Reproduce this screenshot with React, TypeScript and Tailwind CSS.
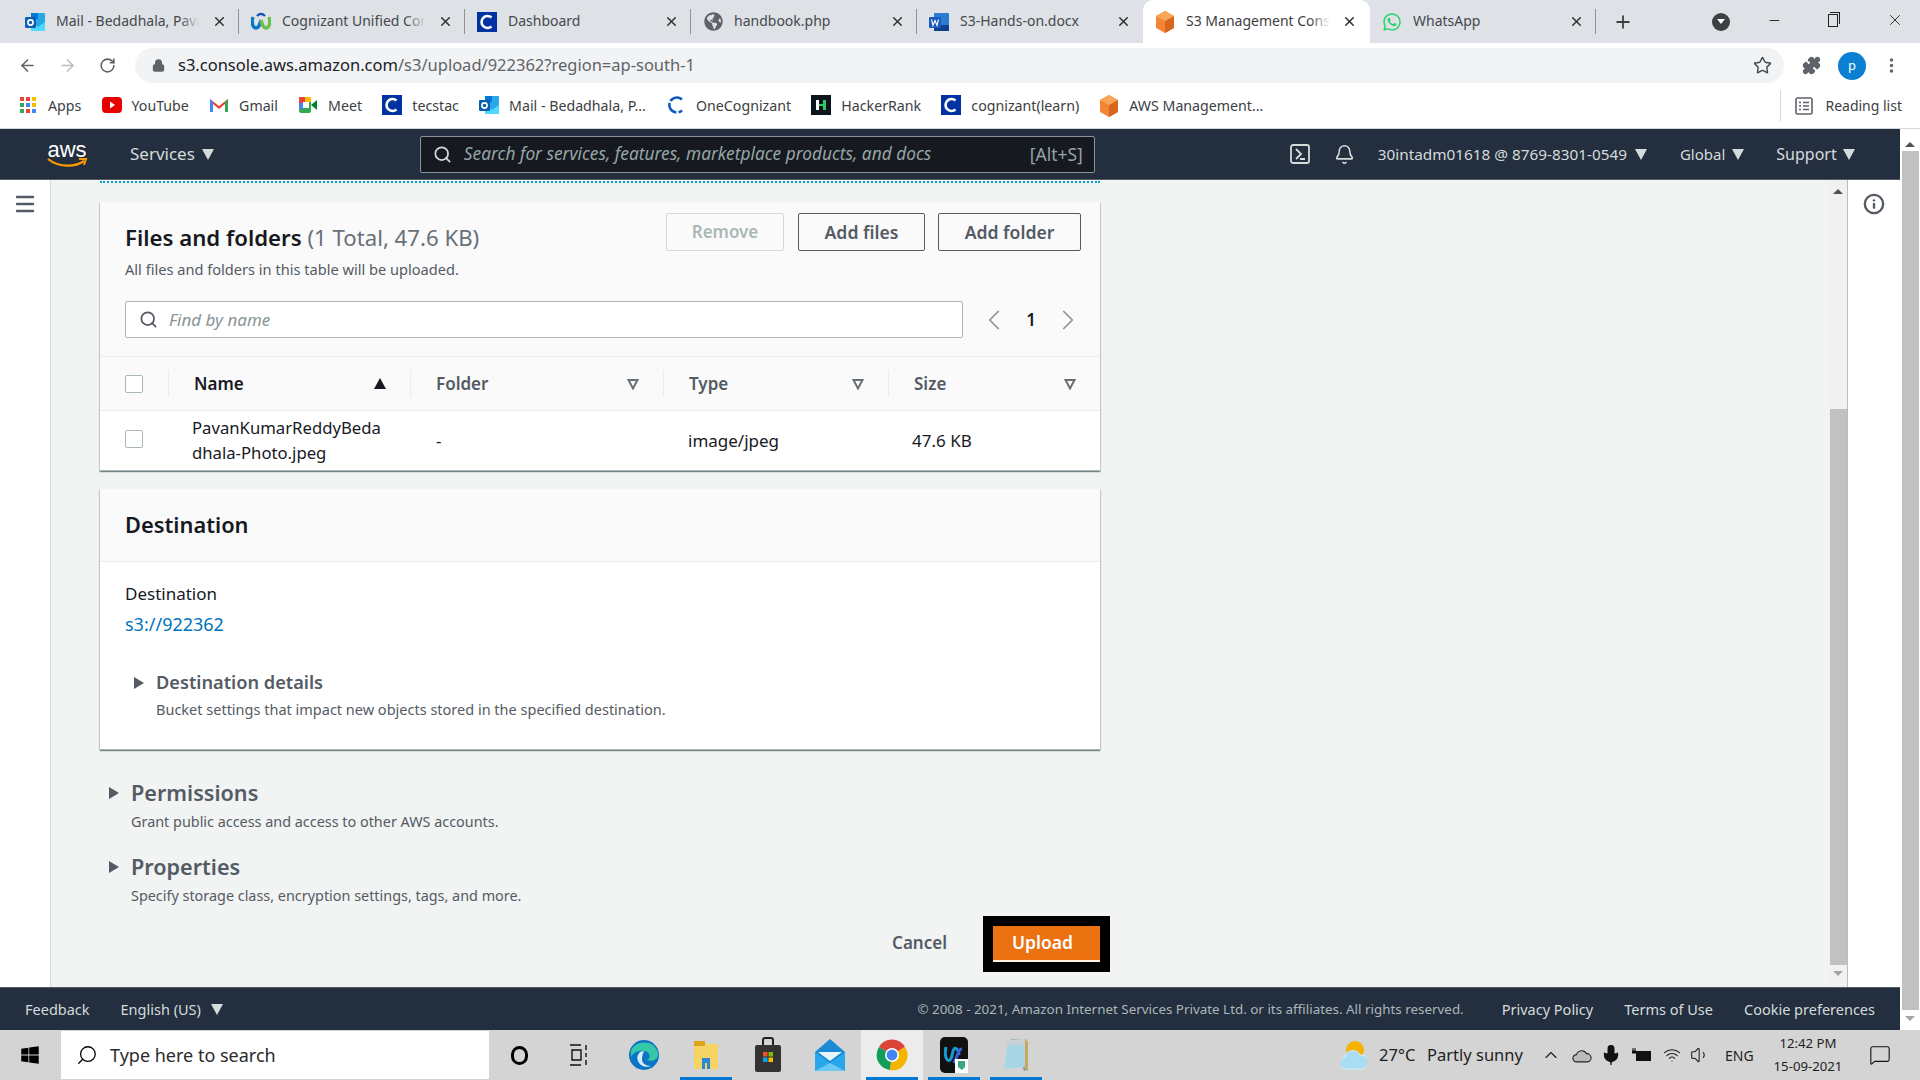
import { ChevronLeft, ChevronRight, Search, Bell, ArrowLeft, ArrowRight, RotateCw, Lock, Star, Puzzle, Plus, X, Minus, EllipsisVertical, Menu, Info, ChevronUp, Wifi, Volume1, Mic, MessageSquare } from 'lucide-react';
import { FaWhatsapp, FaGlobeAmericas, FaWindows } from 'react-icons/fa';

function Outlook() {
  return (
    <svg viewBox="0 0 20 20" className="w-5 h-5 shrink-0">
      <rect x="6" y="1" width="14" height="18" rx="1" fill="#28a8ea" />
      <rect x="6" y="1" width="7" height="6" fill="#0078d4" />
      <path d="M6 10l7 5 7-5v9H6z" fill="#50d9ff" />
      <rect x="0" y="5" width="11" height="11" rx="1" fill="#0f5fb0" />
      <circle cx="5.5" cy="10.500" r="2.6" fill="none" stroke="#fff" strokeWidth="1.6" />
    </svg>
  );
}

function CBox() {
  return (
    <svg viewBox="0 0 20 20" className="w-5 h-5 shrink-0">
      <rect width="20" height="20" fill="#0033a1" />
      <path d="M14.5 5.500a6 6 0 1 0 0 9" fill="none" stroke="#fff" strokeWidth="2.6" />
    </svg>
  );
}

function Cube() {
  return (
    <svg viewBox="0 0 20 22" className="w-5 h-[22px] shrink-0">
      <path d="M10 0l9 5v12l-9 5-9-5V5z" fill="#f58536" />
      <path d="M10 10l9-5v12l-9 5z" fill="#d9661f" />
      <path d="M10 0l9 5-9 5-9-5z" fill="#f9a65a" />
    </svg>
  );
}

function Word() {
  return (
    <svg viewBox="0 0 20 20" className="w-5 h-5 shrink-0">
      <rect x="5" y="1" width="15" height="18" rx="1" fill="#2b7cd3" />
      <rect x="5" y="13" width="15" height="6" fill="#103f91" />
      <rect x="0" y="5" width="12" height="11" rx="1" fill="#185abd" />
      <path d="M2.5 7.500l1.500 6 2-5 2 5 1.500-6" fill="none" stroke="#fff" strokeWidth="1.1" />
    </svg>
  );
}

function Webex() {
  return (
    <svg viewBox="0 0 20 20" className="w-5 h-5 shrink-0">
      <path d="M2 5c-2 6 0 11 3 11s4-4 5-8" fill="none" stroke="#0a78c2" strokeWidth="3.4" />
      <path d="M18 5c2 6 0 11-3 11s-4-4-5-8" fill="none" stroke="#6cc04a" strokeWidth="3.4" />
      <path d="M6 4c3-3 5-3 8 0" fill="none" stroke="#1a4fb5" strokeWidth="2.4" />
    </svg>
  );
}

function Tab({ title, icon, active = false, sep = true, width = 'w-[226px]' }: { title: string; icon: React.ReactNode; active?: boolean; sep?: boolean; width?: string }) {
  return (
    <div className={`${width} h-[43px] relative flex items-center pl-[12px] shrink-0 ${active ? 'bg-white rounded-t-[10px]' : ''}`}>
      <span className="w-5 flex justify-center shrink-0">{icon}</span>
      <span className={`ml-[11px] w-[144px] pb-[2px] relative overflow-hidden whitespace-nowrap text-[14px] ${active ? 'text-[#3c4043]' : 'text-[#45494d]'}`}>
        {title}
        <span className={`absolute right-0 top-0 h-full w-5 bg-gradient-to-r from-transparent ${active ? 'to-white' : 'to-[#dee1e6]'}`} />
      </span>
      <X size={15} strokeWidth={2.4} className="ml-[12px] shrink-0 text-[#2e3033]" />
      {sep && <span className="absolute right-0 top-[9px] h-[25px] w-px bg-[#8f9297]" />}
    </div>
  );
}

function TabStrip() {
  return (
    <div className="h-[43px] bg-[#dee1e6] flex items-center pl-[13px] shrink-0">
      <Tab title="Mail - Bedadhala, Pavan" icon={<Outlook />} />
      <Tab title="Cognizant Unified Console" icon={<Webex />} />
      <Tab title="Dashboard" icon={<CBox />} />
      <Tab title="handbook.php" icon={<FaGlobeAmericas size={19} className="text-[#5f6368]" />} />
      <Tab title="S3-Hands-on.docx" icon={<Word />} sep={false} />
      <Tab title="S3 Management Console" icon={<Cube />} active sep={false} width="w-[227px]" />
      <Tab title="WhatsApp" icon={<FaWhatsapp size={20} className="text-[#25d366]" />} />
      <Plus size={20} strokeWidth={2.2} className="ml-[17px] text-[#3c4043]" />
      <span className="ml-[79px] w-[18px] h-[18px] rounded-full bg-[#3c4043] flex items-center justify-center">
        <span className="w-0 h-0 border-x-[4px] border-x-transparent border-t-[5px] border-t-white" />
      </span>
      <Minus size={15} strokeWidth={1.5} className="ml-[37px] -mt-[3px] text-[#222]" />
      <span className="ml-[46px] -mt-[3px] w-[10px] h-[13px] border border-[#222] relative">
        <span className="absolute -top-[3px] -right-[3px] w-[10px] h-[12px] border-t border-r border-[#222]" />
      </span>
      <X size={18} strokeWidth={1.2} className="ml-[48px] -mt-[3px] text-[#222]" />
    </div>
  );
}

function Toolbar() {
  return (
    <div className="h-[40px] bg-white flex items-start pl-[18px] shrink-0">
      <div className="h-[35px] mt-[5px] flex items-center">
        <ArrowLeft size={19} strokeWidth={2} className="text-[#5f6368]" />
        <ArrowRight size={19} strokeWidth={2} className="ml-[21px] text-[#babcbe]" />
        <RotateCw size={17} strokeWidth={2.2} className="ml-[22px] text-[#5f6368]" />
      </div>
      <div className="ml-[19px] mt-[5px] w-[1649px] h-[35px] rounded-full bg-[#f1f3f4] flex items-center pl-[17px]">
        <Lock size={13} strokeWidth={3} className="text-[#5f6368] fill-[#5f6368]" />
        <span className="ml-[13px] text-[16.5px] text-[#202124]">s3.console.aws.amazon.com<span className="text-[#5f6368]">/s3/upload/922362?region=ap-south-1</span></span>
        <Star size={19} strokeWidth={1.8} className="ml-auto mr-[12px] text-[#45494d]" />
      </div>
      <div className="h-[35px] mt-[5px] flex items-center">
        <Puzzle size={19} className="ml-[18px] text-[#5f6368] fill-[#5f6368]" />
        <span className="ml-[17px] w-[28px] h-[28px] rounded-full bg-[#0b7fd1] text-white text-[13px] flex items-center justify-center">p</span>
        <EllipsisVertical size={19} strokeWidth={2.5} className="ml-[16px] text-[#5f6368]" />
      </div>
    </div>
  );
}

function Bookmark({ icon, label }: { icon: React.ReactNode; label: string }) {
  return (
    <div className="flex items-center mr-[20.2px] shrink-0">
      <span className="w-5 flex justify-center">{icon}</span>
      <span className="ml-[10px] text-[14.2px] text-[#3c4043] whitespace-nowrap">{label}</span>
    </div>
  );
}

function Bookmarks() {
  return (
    <div className="h-[46px] bg-white border-b border-[#d5d7da] flex items-center pl-[18px] shrink-0">
      <Bookmark label="Apps" icon={
        <svg viewBox="0 0 16 16" className="w-4 h-4">
          <rect x="0" y="0" width="4" height="4" fill="#ea4335" /><rect x="6" y="0" width="4" height="4" fill="#ea4335" /><rect x="12" y="0" width="4" height="4" fill="#fbbc05" />
          <rect x="0" y="6" width="4" height="4" fill="#34a853" /><rect x="6" y="6" width="4" height="4" fill="#4285f4" /><rect x="12" y="6" width="4" height="4" fill="#fbbc05" />
          <rect x="0" y="12" width="4" height="4" fill="#34a853" /><rect x="6" y="12" width="4" height="4" fill="#ea4335" /><rect x="12" y="12" width="4" height="4" fill="#4285f4" />
        </svg>} />
      <Bookmark label="YouTube" icon={
        <svg viewBox="0 0 20 16" className="w-5 h-4"><rect width="20" height="16" rx="4" fill="#e60000" /><path d="M8 4.500l5 3.500-5 3.500z" fill="#fff" /></svg>} />
      <Bookmark label="Gmail" icon={
        <svg viewBox="0 0 20 16" className="w-5 h-4"><path d="M1 15V2l9 7 9-7v13h-3V7l-6 5-6-5v8z" fill="#ea4335" /><path d="M1 15V2l3 3v10z" fill="#4285f4" /><path d="M19 15V2l-3 3v10z" fill="#34a853" /></svg>} />
      <Bookmark label="Meet" icon={
        <svg viewBox="0 0 20 18" className="w-5 h-[18px]"><rect x="1" y="1" width="12" height="16" rx="2" fill="#34a853" /><rect x="1" y="1" width="6" height="6" fill="#ea4335" /><rect x="1" y="7" width="5" height="6" fill="#4285f4" /><rect x="7" y="1" width="6" height="5" fill="#fbbc05" /><rect x="5" y="6" width="6" height="6" fill="#fff" /><path d="M13 9l6-5v10z" fill="#00832d" /></svg>} />
      <Bookmark label="tecstac" icon={<CBox />} />
      <Bookmark label="Mail - Bedadhala, P..." icon={<Outlook />} />
      <Bookmark label="OneCognizant" icon={
        <svg viewBox="0 0 20 20" className="w-5 h-5"><path d="M16 4.500A7.500 7.500 0 1 0 16 15.500" fill="none" stroke="#0d5bc2" strokeWidth="2.6" strokeDasharray="13 2" /></svg>} />
      <Bookmark label="HackerRank" icon={
        <svg viewBox="0 0 20 20" className="w-5 h-5"><rect width="20" height="20" fill="#0e141e" /><rect x="5" y="5" width="3" height="10" fill="#fff" /><rect x="12" y="5" width="3" height="10" fill="#2ec866" /><rect x="8" y="9" width="4" height="2" fill="#2ec866" /></svg>} />
      <Bookmark label="cognizant(learn)" icon={<CBox />} />
      <Bookmark label="AWS Management..." icon={<Cube />} />
      <div className="ml-auto h-[31px] border-l border-[#d5d7da] pl-[14px] pr-[18px] flex items-center">
        <svg viewBox="0 0 18 18" className="w-[18px] h-[18px] text-[#5f6368]" fill="none" stroke="currentColor" strokeWidth="1.6">
          <rect x="1" y="1" width="16" height="16" rx="1.5" />
          <path d="M4 5.500h2M8 5.500h6M4 9h2M8 9h6M4 12.500h2M8 12.500h6" />
        </svg>
        <span className="ml-[12px] text-[14px] text-[#3c4043] whitespace-nowrap">Reading list</span>
      </div>
    </div>
  );
}

function Caret({ color = 'border-t-[#d5dbdb]', cls = '' }: { color?: string; cls?: string }) {
  return <span className={`inline-block w-0 h-0 border-x-[6px] border-x-transparent border-t-[11px] ${color} ${cls}`} />;
}

function TopNav() {
  return (
    <div className="h-[51px] bg-[#232f3e] border-b border-[#545b64] flex items-center shrink-0 text-[#d5dbdb]">
      <div className="ml-[46px] w-[42px] flex flex-col items-center">
        <span className="text-[22px] leading-[17px] text-white font-['Liberation_Sans',sans-serif]">aws</span>
        <svg viewBox="0 0 42 10" className="w-[42px] h-[10px]">
          <path d="M2 1c10 8 26 9 36 2" fill="none" stroke="#f90" strokeWidth="2.2" />
          <path d="M33 1l7 0-2 6" fill="none" stroke="#f90" strokeWidth="2" />
        </svg>
      </div>
      <span className="ml-[42px] text-[17px]">Services</span>
      <Caret cls="ml-[7px]" />
      <div className="ml-[206px] w-[675px] h-[37px] bg-[#16191f] border border-[#879596] rounded-[2px] flex items-center pl-[12px] pr-[11px] shrink-0">
        <Search size={19} strokeWidth={2.2} className="text-[#d5dbdb]" />
        <span className="ml-[12px] text-[17.3px] italic text-[#95a5a6] whitespace-nowrap">Search for services, features, marketplace products, and docs</span>
        <span className="ml-auto text-[17.5px] text-[#95a5a6]">[Alt+S]</span>
      </div>
      <svg viewBox="0 0 20 20" className="ml-[195px] w-5 h-5 shrink-0" fill="none" stroke="#d5dbdb" strokeWidth="1.8">
        <rect x="1" y="1" width="18" height="18" rx="2" />
        <path d="M6 5l5 5-5 5M10 15h5" />
      </svg>
      <Bell size={21} strokeWidth={1.8} className="ml-[24px] text-[#d5dbdb] shrink-0" />
      <span className="ml-[23px] text-[15.3px] whitespace-nowrap">30intadm01618 @ 8769-8301-0549</span>
      <Caret cls="ml-[8px]" />
      <span className="ml-[33px] text-[15px]">Global</span>
      <Caret cls="ml-[7px]" />
      <span className="ml-[32px] text-[16px]">Support</span>
      <Caret cls="ml-[6px]" />
    </div>
  );
}

function Btn({ label, disabled = false }: { label: string; disabled?: boolean }) {
  return (
    <div className={`h-[38px] rounded-[2px] border flex items-center justify-center font-semibold ${disabled ? 'w-[118px] text-[17px] border-[#d5dbdb] text-[#aab7b8]' : 'text-[17.6px] border-[#545b64] text-[#545b64]'} ${label === 'Add files' ? 'w-[127px] ml-[14px]' : ''} ${label === 'Add folder' ? 'w-[143px] ml-[13px]' : ''}`}>
      {label}
    </div>
  );
}

function FilterCaret() {
  return (
    <svg viewBox="0 0 12 12" className="w-3 h-3 shrink-0 ml-auto">
      <path d="M1.500 2h9L6 10.500z" fill="none" stroke="#687078" strokeWidth="2" />
    </svg>
  );
}

function Th({ label, w, last = false, children }: { label: string; w: string; last?: boolean; children?: React.ReactNode }) {
  return (
    <div className={`${w} h-[27px] flex items-center pl-[25px] pr-[24px] ${last ? '' : 'border-r border-[#eaeded]'}`}>
      <span className={`text-[17px] font-semibold ${label === 'Name' ? 'text-[#16191f]' : 'text-[#545b64]'}`}>{label}</span>
      {children ?? <FilterCaret />}
    </div>
  );
}

function FilesCard() {
  return (
    <div className="bg-white shadow-[0_1px_1px_0_rgba(0,28,36,0.3),1px_1px_1px_0_rgba(0,28,36,0.15),-1px_1px_1px_0_rgba(0,28,36,0.15)] border-b border-[#aab7b8]">
      <div className="bg-[#fafafa] border-b border-[#eaeded]">
        <div className="h-[154px] pl-[25px] pr-[19px]">
          <div className="flex pt-[11px]">
            <div>
              <div className="text-[22.200px] leading-[28px] mt-[11px] text-[#16191f] font-semibold whitespace-nowrap">
                Files and folders <span className="font-normal text-[#687078]">(1 Total, 47.6 KB)</span>
              </div>
              <div className="text-[14.600px] leading-[20px] mt-[7px] text-[#545b64]">All files and folders in this table will be uploaded.</div>
            </div>
            <div className="ml-auto flex">
              <Btn label="Remove" disabled />
              <Btn label="Add files" />
              <Btn label="Add folder" />
            </div>
          </div>
          <div className="flex items-center mt-[22px] -mr-[19px]">
            <div className="w-[838px] h-[37px] bg-white border border-[#aab7b8] rounded-[2px] flex items-center pl-[13px] shrink-0">
              <Search size={19} strokeWidth={2.2} className="text-[#545b64]" />
              <span className="ml-[11px] text-[17px] italic text-[#879596]">Find by name</span>
            </div>
            <ChevronLeft size={34} strokeWidth={1.2} className="ml-[14px] text-[#879596] shrink-0" />
            <span className="ml-[15px] w-[10px] text-center text-[17px] font-semibold text-[#16191f]">1</span>
            <ChevronRight size={34} strokeWidth={1.2} className="ml-[15px] text-[#879596] shrink-0" />
          </div>
        </div>
      </div>
      <div className="h-[54px] bg-[#fafafa] border-b border-[#eaeded] flex items-center">
        <div className="w-[69px] h-[27px] pl-[25px] border-r border-[#eaeded] flex items-center">
          <span className="w-[18px] h-[18px] bg-white border border-[#aab7b8] rounded-[2px]" />
        </div>
        <Th label="Name" w="w-[242px]">
          <span className="ml-auto w-0 h-0 border-x-[6px] border-x-transparent border-b-[11px] border-b-[#16191f]" />
        </Th>
        <Th label="Folder" w="w-[253px]" />
        <Th label="Type" w="w-[225px]" />
        <Th label="Size" w="w-[211px]" last />
      </div>
      <div className="h-[59px] flex items-center text-[17px] leading-[25px] text-[#16191f]">
        <div className="w-[67px] pl-[25px] flex items-center -mt-[3px]">
          <span className="w-[18px] h-[18px] bg-white border border-[#aab7b8] rounded-[2px]" />
        </div>
        <div className="w-[243px] pl-[25px] -mt-[2px] text-[16.700px] whitespace-nowrap">PavanKumarReddyBeda<br />dhala-Photo.jpeg</div>
        <div className="w-[254px] pl-[26px]">-</div>
        <div className="w-[225px] pl-[24px] -mt-[1px]">image/jpeg</div>
        <div className="pl-[23px] -mt-[1px]">47.6 KB</div>
      </div>
    </div>
  );
}

function DestCard() {
  return (
    <div className="bg-white mt-[18px] shadow-[0_1px_1px_0_rgba(0,28,36,0.3),1px_1px_1px_0_rgba(0,28,36,0.15),-1px_1px_1px_0_rgba(0,28,36,0.15)] border-b border-[#aab7b8]">
      <div className="h-[73px] bg-[#fafafa] border-b border-[#eaeded] px-[25px] flex items-center">
        <span className="text-[21.800px] font-semibold text-[#16191f]">Destination</span>
      </div>
      <div className="h-[187px] px-[25px] pt-[19px]">
        <div className="text-[17px] leading-[25px] text-[#16191f]">Destination</div>
        <div className="text-[18px] leading-[25px] mt-[6px] text-[#0073bb]">s3://922362</div>
        <div className="flex items-center mt-[33px] pl-[9px]">
          <span className="w-0 h-0 border-y-[6px] border-y-transparent border-l-[10px] border-l-[#545b64]" />
          <span className="ml-[12px] text-[18.200px] leading-[25px] font-semibold text-[#545b64]">Destination details</span>
        </div>
        <div className="ml-[31px] mt-[4px] text-[14.500px] leading-[20px] text-[#545b64]">Bucket settings that impact new objects stored in the specified destination.</div>
      </div>
    </div>
  );
}

function Section({ title, sub, cls }: { title: string; sub: string; cls: string }) {
  return (
    <div className={cls}>
      <div className="flex items-center pl-[9px]">
        <span className="w-0 h-0 border-y-[6px] border-y-transparent border-l-[10px] border-l-[#545b64]" />
        <span className="ml-[12px] text-[21.600px] leading-[30px] font-semibold text-[#545b64]">{title}</span>
      </div>
      <div className="ml-[31px] mt-[4px] text-[14.400px] leading-[20px] text-[#545b64]">{sub}</div>
    </div>
  );
}

function InnerScroll() {
  return (
    <div className="w-[18px] bg-[#f1f1f1] flex flex-col items-center shrink-0">
      <span className="mt-[9px] w-0 h-0 border-x-[5px] border-x-transparent border-b-[5px] border-b-[#505050]" />
      <span className="mt-[215px] w-[17px] h-[556px] bg-[#c1c1c1]" />
      <span className="mt-[6px] w-0 h-0 border-x-[5px] border-x-transparent border-t-[5px] border-t-[#a3a3a3]" />
    </div>
  );
}

function Content() {
  return (
    <div className="h-[807px] flex shrink-0">
      <div className="w-[51px] bg-white border-r border-[#d5dbdb] flex justify-center pt-[12px] shrink-0">
        <Menu size={24} strokeWidth={2.4} className="text-[#545b64]" />
      </div>
      <div className="w-[1778px] bg-[#f2f3f3] shrink-0 pl-[49px]">
        <div className="w-[1000px]">
          <div className="h-[22px] pt-[1px]">
            <div className="border-t-[2px] border-dotted border-[#00a1c9]" />
          </div>
          <FilesCard />
          <DestCard />
          <Section title="Permissions" sub="Grant public access and access to other AWS accounts." cls="mt-[28px]" />
          <Section title="Properties" sub="Specify storage class, encryption settings, tags, and more." cls="mt-[20px]" />
        </div>
        <div className="w-[1010px] flex items-center justify-end mt-[10px]">
          <span className="text-[17px] font-semibold text-[#545b64] -mt-[3px]">Cancel</span>
          <div className="ml-[36px] w-[127px] h-[56px] bg-black flex items-center justify-center">
            <div className="w-[107px] h-[36px] bg-[#ec7211] border-b-2 border-[#fff0e0] flex items-center pl-[19px] pb-[2px] text-[17.500px] font-semibold text-white">Upload</div>
          </div>
        </div>
      </div>
      <InnerScroll />
      <div className="w-[52px] bg-white border-l border-[#b8bdbd] flex justify-center pt-[13px] shrink-0">
        <Info size={22} strokeWidth={2.6} className="text-[#545b64]" />
      </div>
    </div>
  );
}

function Footer() {
  return (
    <div className="h-[43px] bg-[#232f3e] border-t border-[#545b64] pt-[1px] flex items-center text-[14.500px] text-[#d5dbdb] shrink-0">
      <span className="ml-[25px]">Feedback</span>
      <span className="ml-[31px]">English (US)</span>
      <Caret cls="ml-[10px]" />
      <span className="ml-auto text-[13.400px] text-[#aab7b8]">© 2008 - 2021, Amazon Internet Services Private Ltd. or its affiliates. All rights reserved.</span>
      <span className="ml-[38px]">Privacy Policy</span>
      <span className="ml-[31px]">Terms of Use</span>
      <span className="ml-[31px] mr-[25px]">Cookie preferences</span>
    </div>
  );
}

function PageScroll() {
  return (
    <div className="w-[20px] bg-white flex flex-col items-center shrink-0">
      <span className="mt-[13px] w-0 h-0 border-x-[5px] border-x-transparent border-b-[5px] border-b-[#505050]" />
      <span className="mt-[4px] w-[17px] h-[859px] bg-[#c1c1c1]" />
      <span className="mt-[6px] w-0 h-0 border-x-[5px] border-x-transparent border-t-[5px] border-t-[#a3a3a3]" />
    </div>
  );
}

function TaskSlot({ children, on = false, active = false }: { children: React.ReactNode; on?: boolean; active?: boolean }) {
  return (
    <div className={`w-[62px] h-[50px] flex items-center justify-center relative ${active ? 'bg-[#ececec]' : ''}`}>
      {children}
      {on && <span className="absolute bottom-0 left-[5px] right-[5px] h-[3px] bg-[#0078d4]" />}
    </div>
  );
}

function Taskbar() {
  return (
    <div className="h-[50px] bg-[#d4d4d4] flex items-center shrink-0">
      <FaWindows size={20} className="ml-[20px] text-black" />
      <div className="ml-[21px] w-[428px] h-[48px] bg-white flex items-center pl-[15px]">
        <Search size={22} strokeWidth={1.4} className="text-black -scale-x-100" />
        <span className="ml-[12px] text-[18px] text-[#2b2b2b]">Type here to search</span>
      </div>
      <span className="ml-[22px] w-[17px] h-[19px] rounded-full border-[3px] border-black" />
      <svg viewBox="0 0 20 22" className="ml-[41px] w-5 h-[22px]" fill="none" stroke="#111" strokeWidth="1.4">
        <path d="M1 1h11M1 21h11M3 6h9v10H3zM17 1v5M17 9v4M17 16v5" />
      </svg>
      <div className="ml-[24px] flex">
        <TaskSlot>
          <svg viewBox="0 0 32 32" className="w-8 h-8">
            <circle cx="16" cy="16" r="15" fill="#0c74c4" />
            <path d="M3 12C6 2 26-1 30 14c1 7-7 9-11 7 4-1 4-8-3-9C10 11 5 14 3 18z" fill="#35c7a8" />
            <path d="M16 12c-5 0-8 5-6 10 2 5 8 7 13 5-6 0-9-3-9-7 0-3 1-6 2-8z" fill="#d4eefb" />
          </svg>
        </TaskSlot>
        <TaskSlot on>
          <svg viewBox="0 0 28 32" className="w-7 h-8">
            <path d="M2 2h10l2 3h12v25H2z" fill="#f6d365" />
            <rect x="2" y="2" width="11" height="5" fill="#e0a21b" />
            <path d="M10 30V19h8v11h-3v-6h-2v6z" fill="#2b88d8" />
          </svg>
        </TaskSlot>
        <TaskSlot>
          <svg viewBox="0 0 28 36" className="w-7 h-9">
            <path d="M9 8V3a2 2 0 0 1 2-2h6a2 2 0 0 1 2 2v5" fill="none" stroke="#222" strokeWidth="2" />
            <rect x="1" y="8" width="26" height="27" rx="2" fill="#333" />
            <rect x="9" y="15" width="4.500" height="4.500" fill="#f25022" /><rect x="14.500" y="15" width="4.500" height="4.500" fill="#7fba00" />
            <rect x="9" y="20.500" width="4.500" height="4.500" fill="#00a4ef" /><rect x="14.500" y="20.500" width="4.500" height="4.500" fill="#ffb900" />
          </svg>
        </TaskSlot>
        <TaskSlot>
          <svg viewBox="0 0 30 34" className="w-[30px] h-[34px]">
            <path d="M15 1L30 14v19H0V14z" fill="#1a8ad4" />
            <path d="M3 14h24l-12 9z" fill="#e7f5fd" />
            <path d="M0 14l15 11 15-11v19H0z" fill="#28a8ea" />
            <path d="M15 25l15 8H0z" fill="#6cc8f2" />
          </svg>
        </TaskSlot>
        <TaskSlot on active>
          <svg viewBox="0 0 32 32" className="w-8 h-8">
            <path d="M16 16L3 8A15 15 0 0 1 29 8z" fill="#db4437" />
            <path d="M16 16L3 8a15 15 0 0 0 11 23z" fill="#0f9d58" />
            <path d="M16 16l13-8a15 15 0 0 1-15 23z" fill="#f4b400" />
            <circle cx="16" cy="16" r="7" fill="#fff" />
            <circle cx="16" cy="16" r="5.4" fill="#4285f4" />
          </svg>
        </TaskSlot>
        <TaskSlot on>
          <svg viewBox="0 0 28 36" className="w-7 h-9">
            <rect width="28" height="36" rx="5" fill="#111" />
            <path d="M6 10c-2 10 1 15 4 13 3-3 2-9 4-11s5 1 5 6" fill="none" stroke="#1b9ad6" strokeWidth="3" />
            <path d="M14 26c4-8 4-14 8-14" fill="none" stroke="#3a62d7" strokeWidth="3" />
            <path d="M15 22h13v14H15z" fill="#fff" />
            <path d="M18 24h7v6l-3 3-4-3z" fill="#39a77f" />
          </svg>
        </TaskSlot>
        <TaskSlot on>
          <svg viewBox="0 0 28 34" className="w-7 h-[34px]">
            <path d="M9 1h15l2 31-4 1z" fill="#8f9aa0" />
            <path d="M6 2l17-1 0 28-21 2z" fill="#a9d6e5" />
            <path d="M6 2l17-1v5L5 7z" fill="#c9d1d4" />
            <path d="M23 1l3 3 0 27-3 1z" fill="#c9a85b" />
          </svg>
        </TaskSlot>
      </div>
      <svg viewBox="0 0 26 30" className="ml-[294px] w-[26px] h-[30px] shrink-0">
        <circle cx="14" cy="10" r="9" fill="#f5b300" />
        <path d="M5 29a6 6 0 0 1-1-12 8 8 0 0 1 15-2 6 6 0 0 1 2 14z" fill="#a9dcf5" stroke="#d9f0fb" />
      </svg>
      <span className="ml-[12px] w-[37px] whitespace-nowrap text-[16.500px] text-[#1f1f1f]">27°C</span>
      <span className="ml-[11px] w-[96px] whitespace-nowrap text-[16.500px] text-[#1f1f1f]">Partly sunny</span>
      <ChevronUp size={20} strokeWidth={1.4} className="ml-[18px] text-[#222] shrink-0" />
      <svg viewBox="0 0 22 16" className="ml-[11px] w-[20px] h-[15px] shrink-0" fill="#bbb" stroke="#222" strokeWidth="1.2">
        <path d="M5 15a4 4 0 0 1 0-8 6 6 0 0 1 11-1 4.500 4.500 0 0 1 1 9z" />
      </svg>
      <Mic size={22} strokeWidth={1.6} className="ml-[8px] text-[#111] fill-[#111] shrink-0" />
      <svg viewBox="0 0 20 14" className="ml-[10px] w-[20px] h-[14px] shrink-0">
        <rect x="4" y="3" width="15" height="10" fill="#111" /><path d="M1 0v3M3 0v3M0 3h4v2H0z" stroke="#111" />
      </svg>
      <Wifi size={18} strokeWidth={1.4} className="ml-[11px] text-[#222] shrink-0" />
      <Volume1 size={20} strokeWidth={1.3} className="ml-[9px] text-[#222] shrink-0" />
      <span className="ml-[15px] w-[29px] whitespace-nowrap text-[14px] text-[#1f1f1f]">ENG</span>
      <div className="ml-[16px] w-[76px] flex flex-col items-center text-[13.200px] leading-[23px] text-[#1f1f1f] shrink-0">
        <span>12:42 PM</span>
        <span>15-09-2021</span>
      </div>
      <MessageSquare size={22} strokeWidth={1.2} className="ml-[23px] text-[#111] shrink-0" />
    </div>
  );
}

export default function App() {
  return (
    <div className="w-[1920px] h-[1080px] overflow-hidden flex flex-col bg-white font-['Noto_Sans',sans-serif]">
      <TabStrip />
      <Toolbar />
      <Bookmarks />
      <div className="h-[901px] flex shrink-0">
        <div className="w-[1900px] shrink-0">
          <TopNav />
          <Content />
          <Footer />
        </div>
        <PageScroll />
      </div>
      <Taskbar />
    </div>
  );
}
